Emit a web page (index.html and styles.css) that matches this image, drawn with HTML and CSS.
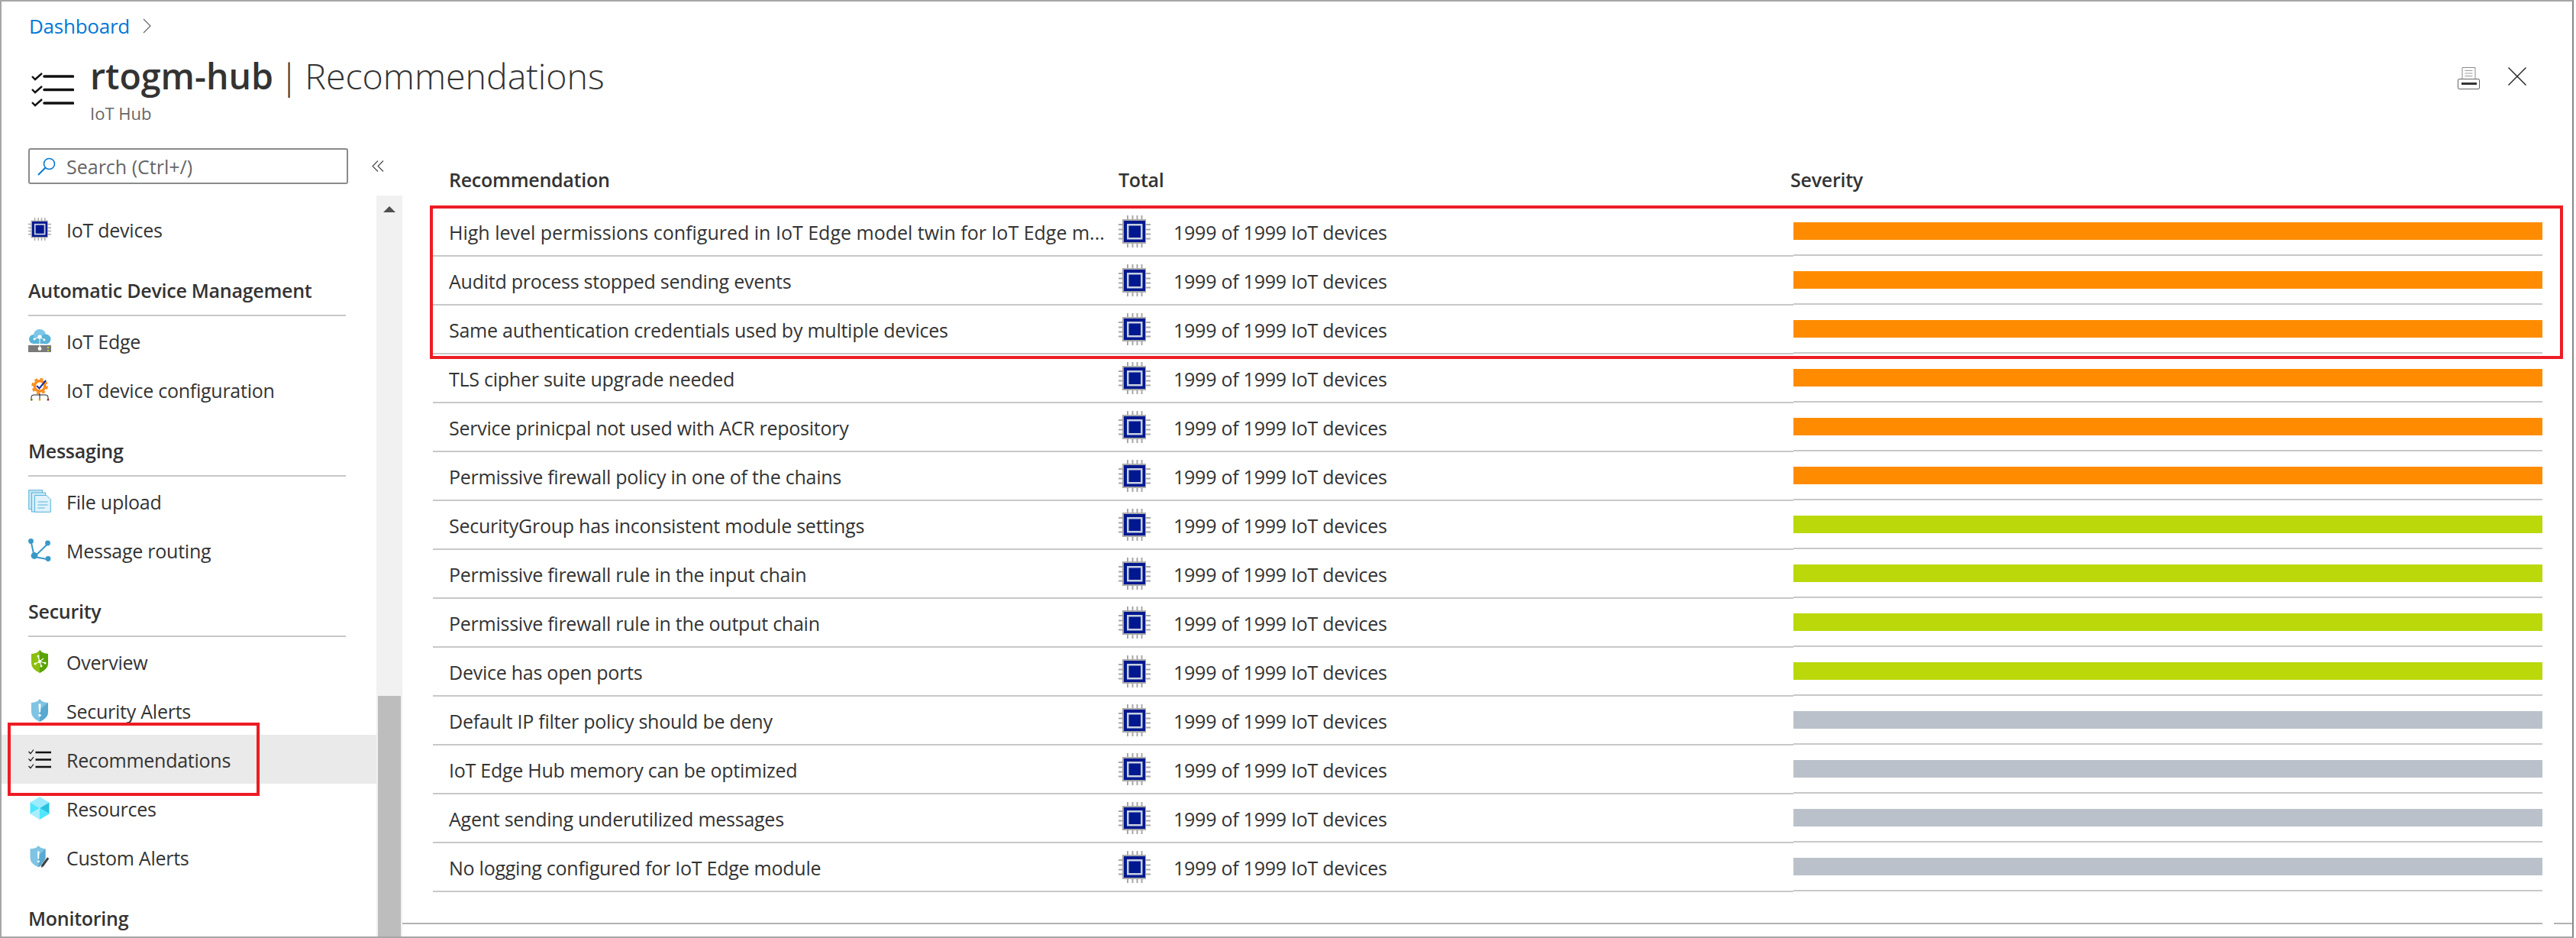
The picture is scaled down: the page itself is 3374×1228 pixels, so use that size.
FILE: index.html
```html
<!DOCTYPE html>
<html lang="en">
<head>
  <meta charset="UTF-8" />
  <title>rtogm-hub | Recommendations</title>
  <link rel="stylesheet" href="styles.css">
</head>
<body>

  <!-- Icon sheet -->
  <svg class="icon-sheet" xmlns="http://www.w3.org/2000/svg">
    <symbol id="i-check" viewBox="0 0 56 46">
      <path d="M17 6H54.500M17 23.500H54.500M17 41H54.500" fill="none" stroke="currentColor" stroke-width="3.600" stroke-linecap="round"/>
      <path d="M1 6l4 4 9-8M1 23l4 4 9-8M1 40l4 4 9-8" fill="none" stroke="currentColor" stroke-width="2.400"/>
    </symbol>
    <symbol id="i-check-small" viewBox="0 0 30 30">
      <path d="M9.500 6H30M9.500 15.500H30M9.500 25H30" fill="none" stroke="currentColor" stroke-width="2.400"/>
      <path d="M.500 5l2.500 2.500 4-5M.500 14.500l2.500 2.500 4-5M.500 24l2.500 2.500 4-5" fill="none" stroke="currentColor" stroke-width="1.200"/>
    </symbol>
    <symbol id="i-chip" viewBox="0 0 42 42">
      <path d="M12 0v42M18.500 0v42M24.500 0v42M30.500 0v42M0 12h42M0 18.500h42M0 24.500h42M0 30.500h42" stroke="#a8a8a8" stroke-width="2" fill="none"/>
      <rect x="5" y="5" width="31" height="32" fill="#a8a8a8"/>
      <rect x="7" y="7" width="28" height="28" fill="#00188f"/>
      <rect x="11" y="11" width="20.500" height="20.500" fill="#c9d0e0"/>
      <rect x="13.500" y="13.500" width="15.500" height="15.500" fill="#00188f"/>
    </symbol>
    <symbol id="i-edge" viewBox="0 0 30 30">
      <circle cx="7" cy="13" r="6" fill="#59b4d9"/>
      <circle cx="15" cy="8" r="8" fill="#7cc6e6"/>
      <circle cx="23" cy="13" r="6.500" fill="#59b4d9"/>
      <rect x="6" y="12" width="18" height="7" fill="#59b4d9"/>
      <path d="M8 13l7-3 6 4M15 10v15" stroke="#fff" stroke-width="1" fill="none"/>
      <circle cx="15" cy="10" r="2.600" fill="#fff"/>
      <circle cx="8" cy="13" r="1.400" fill="#fff"/>
      <circle cx="21" cy="14" r="1.400" fill="#fff"/>
      <rect x="0" y="21" width="30" height="9" fill="#7a7a7a"/>
      <circle cx="15" cy="25.500" r="2.400" fill="#fff"/>
      <path d="M15 19v6" stroke="#fff" stroke-width="1"/>
      <rect x="25" y="23" width="2" height="2" fill="#b8d432"/>
      <rect x="25" y="27" width="2" height="2" fill="#b8d432"/>
    </symbol>
    <symbol id="i-config" viewBox="0 0 30 30">
      <circle cx="15" cy="10.500" r="8.500" fill="#f78d1e"/>
      <circle cx="15" cy="10.500" r="9.500" fill="none" stroke="#f78d1e" stroke-width="2.500" stroke-dasharray="4 3.500"/>
      <circle cx="15" cy="10.500" r="5" fill="#fff"/>
      <path d="M11 10l3.500 3.500L23 3" fill="none" stroke="#1b2f9e" stroke-width="2"/>
      <path d="M4 27v-2a3 3 0 0 1 3-3h16a3 3 0 0 1 3 3v2M15 20v7" fill="none" stroke="#222" stroke-width="1"/>
      <rect x="3" y="27" width="2.500" height="2.500" fill="#5c8a00"/>
      <rect x="13.700" y="27" width="2.500" height="2.500" fill="#d9a520"/>
      <rect x="24.700" y="27" width="2.500" height="2.500" fill="#a4262c"/>
    </symbol>
    <symbol id="i-files" viewBox="0 0 30 30">
      <rect x="0.700" y="0.700" width="18" height="25" fill="#c5e6f5" stroke="#59b4d9"/>
      <rect x="4.500" y="4" width="18" height="25" fill="#d3ecf8" stroke="#59b4d9"/>
      <path d="M8.500 7.500H24l5.300 5.300V29.300H8.500z" fill="#e0f2fa" stroke="#59b4d9"/>
      <path d="M12.500 16h13M12.500 20h13M12.500 24h9" stroke="#59b4d9" stroke-width="1"/>
    </symbol>
    <symbol id="i-route" viewBox="0 0 30 30">
      <path d="M3.500 3.500L8 24L25.500 7M8 24l19 3.500" fill="none" stroke="#3999c6" stroke-width="2"/>
      <circle cx="3.500" cy="3.500" r="3.400" fill="#3999c6"/>
      <circle cx="25.500" cy="6" r="3.400" fill="#3999c6"/>
      <circle cx="8" cy="22.500" r="4.400" fill="#3999c6"/>
      <circle cx="26" cy="26.500" r="3.400" fill="#3999c6"/>
    </symbol>
    <symbol id="i-shield-green" viewBox="0 0 30 30">
      <path d="M15 0l3 3q4 2 8 2v12q0 8-11 13q-11-5-11-13V5q4 0 8-2z" fill="#8cbf0e"/>
      <path d="M15 0l3 3q4 2 8 2v12q0 8-11 13z" fill="#57a300"/>
      <path d="M13 8l2 7-6 3M15 15l7 2M15 15l2 6M15 15l5-4" fill="none" stroke="#fff" stroke-width="1.200"/>
      <circle cx="15" cy="15" r="2" fill="#fff"/>
      <circle cx="13" cy="8" r="1.500" fill="#fff"/>
      <circle cx="9" cy="18" r="1.500" fill="#fff"/>
      <circle cx="22" cy="17" r="1.500" fill="#fff"/>
      <circle cx="17" cy="21" r="1.500" fill="#fff"/>
    </symbol>
    <symbol id="i-shield-blue" viewBox="0 0 30 30">
      <path d="M15 0l3 3q4 2 8 2v12q0 8-11 13q-11-5-11-13V5q4 0 8-2z" fill="#7fc4e2"/>
      <path d="M26 5v12q0 8-11 13V14z" fill="#59a9d1"/>
      <path d="M13.500 6.500h3l-.5 11h-2z" fill="#fff"/>
      <circle cx="15" cy="21.500" r="1.800" fill="#fff"/>
    </symbol>
    <symbol id="i-cube" viewBox="0 0 30 30">
      <path d="M15 0l12.500 7.500L15 15 2.500 7.500z" fill="#9cebff"/>
      <path d="M2.500 7.500L15 15 2.500 22.500z" fill="#50e6ff"/>
      <path d="M27.500 7.500V22.500L15 15z" fill="#29c3e0"/>
      <path d="M2.500 22.500L15 15v15z" fill="#a8efff"/>
      <path d="M27.500 22.500L15 15v15z" fill="#50e6ff"/>
    </symbol>
    <symbol id="i-shield-pen" viewBox="0 0 30 36">
      <path d="M13 0l3 3q4 2 8 2v14q0 10-11 15Q0 29 0 19V5q6 0 10-2z" fill="#7fc4e2"/>
      <path d="M24 5v14q0 10-11 15V16z" fill="#59a9d1"/>
      <path d="M11.500 9h3l-.5 12h-2z" fill="#fff"/>
      <circle cx="13" cy="25" r="1.800" fill="#fff"/>
      <path d="M27 18l3 2.500-9 12.500-4 2 .5-4.500z" fill="#3c3c3c" stroke="#fff" stroke-width="0.600"/>
    </symbol>
  </svg>

  <div class="frame">

    <header class="page-head">
      <nav class="crumbs">
        <a class="crumb-link">Dashboard</a>
        <svg class="crumb-arrow" viewBox="0 0 11 20"><path d="M1 1l9 9-9 9" fill="none" stroke="#666" stroke-width="1.200"/></svg>
      </nav>
      <div class="title-row">
        <svg class="title-icon"><use href="#i-check"/></svg>
        <div class="title-text">
          <h1><b>rtogm-hub</b> | Recommendations</h1>
          <p>IoT Hub</p>
        </div>
        <div class="head-tools">
          <svg class="print-icon" viewBox="0 0 29 29">
            <path d="M6 15V.500h17V15" fill="#fff" stroke="#8a8a8a"/>
            <path d="M9.500 4.500h10M9.500 8h10M9.500 11.500h10" stroke="#999" stroke-width="1"/>
            <rect x="0.500" y="15.500" width="28" height="13" rx="1.500" fill="#fff" stroke="#666"/>
            <rect x="5" y="20" width="20" height="3" fill="#333"/>
          </svg>
          <svg class="close-icon" viewBox="0 0 24 24"><path d="M.500.500l23 23M23.500.500l-23 23" stroke="#222" stroke-width="1.400"/></svg>
        </div>
      </div>
    </header>

    <div class="content">

      <aside class="side">
        <div class="search-row">
          <div class="search">
            <svg class="search-icon" viewBox="0 0 24 24"><circle cx="15.500" cy="8.500" r="7" fill="none" stroke="#0078d4" stroke-width="1.600"/><path d="M10.500 13.500L1 23" stroke="#0078d4" stroke-width="2"/></svg>
            <span>Search (Ctrl+/)</span>
          </div>
          <svg class="collapse" viewBox="0 0 16 15"><path d="M8 .500l-7 7 7 7M15 .500l-7 7 7 7" fill="none" stroke="#444" stroke-width="1.100"/></svg>
        </div>
        <div class="side-body">
          <ul class="menu">
            <li class="item"><svg class="item-icon"><use href="#i-chip"/></svg>IoT devices</li>
            <li class="group">Automatic Device Management</li>
            <li class="item"><svg class="item-icon"><use href="#i-edge"/></svg>IoT Edge</li>
            <li class="item"><svg class="item-icon"><use href="#i-config"/></svg>IoT device configuration</li>
            <li class="group">Messaging</li>
            <li class="item"><svg class="item-icon"><use href="#i-files"/></svg>File upload</li>
            <li class="item"><svg class="item-icon"><use href="#i-route"/></svg>Message routing</li>
            <li class="group">Security</li>
            <li class="item"><svg class="item-icon"><use href="#i-shield-green"/></svg>Overview</li>
            <li class="item"><svg class="item-icon"><use href="#i-shield-blue"/></svg>Security Alerts</li>
            <li class="item active"><svg class="item-icon small-check"><use href="#i-check-small"/></svg>Recommendations</li>
            <li class="item"><svg class="item-icon"><use href="#i-cube"/></svg>Resources</li>
            <li class="item"><svg class="item-icon"><use href="#i-shield-pen"/></svg>Custom Alerts</li>
            <li class="group">Monitoring</li>
          </ul>
          <div class="scrollbar">
            <div class="scroll-up"></div>
            <div class="scroll-thumb"></div>
          </div>
        </div>
      </aside>

      <main class="main">
        <div class="table-head">
          <div class="th-name">Recommendation</div>
          <div class="th-total">Total</div>
          <div class="th-sev">Severity</div>
        </div>

        <div class="row">
          <div class="name clipped">High level permissions configured in IoT Edge model twin for IoT Edge m...</div>
          <div class="total"><svg class="chip"><use href="#i-chip"/></svg>1999 of 1999 IoT devices</div>
          <div class="sev"><div class="bar orange"></div></div>
        </div>
        <div class="row">
          <div class="name">Auditd process stopped sending events</div>
          <div class="total"><svg class="chip"><use href="#i-chip"/></svg>1999 of 1999 IoT devices</div>
          <div class="sev"><div class="bar orange"></div></div>
        </div>
        <div class="row">
          <div class="name">Same authentication credentials used by multiple devices</div>
          <div class="total"><svg class="chip"><use href="#i-chip"/></svg>1999 of 1999 IoT devices</div>
          <div class="sev"><div class="bar orange"></div></div>
        </div>
        <div class="row">
          <div class="name">TLS cipher suite upgrade needed</div>
          <div class="total"><svg class="chip"><use href="#i-chip"/></svg>1999 of 1999 IoT devices</div>
          <div class="sev"><div class="bar orange"></div></div>
        </div>
        <div class="row">
          <div class="name">Service prinicpal not used with ACR repository</div>
          <div class="total"><svg class="chip"><use href="#i-chip"/></svg>1999 of 1999 IoT devices</div>
          <div class="sev"><div class="bar orange"></div></div>
        </div>
        <div class="row">
          <div class="name">Permissive firewall policy in one of the chains</div>
          <div class="total"><svg class="chip"><use href="#i-chip"/></svg>1999 of 1999 IoT devices</div>
          <div class="sev"><div class="bar orange"></div></div>
        </div>
        <div class="row">
          <div class="name">SecurityGroup has inconsistent module settings</div>
          <div class="total"><svg class="chip"><use href="#i-chip"/></svg>1999 of 1999 IoT devices</div>
          <div class="sev"><div class="bar green"></div></div>
        </div>
        <div class="row">
          <div class="name">Permissive firewall rule in the input chain</div>
          <div class="total"><svg class="chip"><use href="#i-chip"/></svg>1999 of 1999 IoT devices</div>
          <div class="sev"><div class="bar green"></div></div>
        </div>
        <div class="row">
          <div class="name">Permissive firewall rule in the output chain</div>
          <div class="total"><svg class="chip"><use href="#i-chip"/></svg>1999 of 1999 IoT devices</div>
          <div class="sev"><div class="bar green"></div></div>
        </div>
        <div class="row">
          <div class="name">Device has open ports</div>
          <div class="total"><svg class="chip"><use href="#i-chip"/></svg>1999 of 1999 IoT devices</div>
          <div class="sev"><div class="bar green"></div></div>
        </div>
        <div class="row">
          <div class="name">Default IP filter policy should be deny</div>
          <div class="total"><svg class="chip"><use href="#i-chip"/></svg>1999 of 1999 IoT devices</div>
          <div class="sev"><div class="bar gray"></div></div>
        </div>
        <div class="row">
          <div class="name">IoT Edge Hub memory can be optimized</div>
          <div class="total"><svg class="chip"><use href="#i-chip"/></svg>1999 of 1999 IoT devices</div>
          <div class="sev"><div class="bar gray"></div></div>
        </div>
        <div class="row">
          <div class="name">Agent sending underutilized messages</div>
          <div class="total"><svg class="chip"><use href="#i-chip"/></svg>1999 of 1999 IoT devices</div>
          <div class="sev"><div class="bar gray"></div></div>
        </div>
        <div class="row">
          <div class="name">No logging configured for IoT Edge module</div>
          <div class="total"><svg class="chip"><use href="#i-chip"/></svg>1999 of 1999 IoT devices</div>
          <div class="sev"><div class="bar gray"></div></div>
        </div>

        <div class="table-foot">
          <div class="foot-line"></div>
          <div class="foot-line end"></div>
        </div>
      </main>

    </div>

    <!-- Red callouts drawn over the screenshot -->
    <div class="callout callout-rows"></div>
    <div class="callout callout-menu"></div>

  </div>

</body>
</html>
```

FILE: styles.css
```css
html, body {
  margin: 0;
  padding: 0;
  background: white;
  height: 100%;
  overflow: hidden;
  font-family: 'Open Sans', sans-serif;
  font-size: 25px;
  letter-spacing: -0.25px;
  color: #333;
}

.icon-sheet {
  display: none;
}

.frame {
  width: 3371px;
  height: 1228px;
  box-sizing: border-box;
  border: 2px solid #a6a6a6;
  border-right-color: #888;
  display: flex;
  flex-direction: column;
  position: relative;
  overflow: hidden;
}

/* Page header */
.page-head {
  height: 178px;
  padding-left: 36px;
  box-sizing: border-box;
  flex: none;
}

.crumbs {
  height: 64px;
  display: flex;
  align-items: center;
  gap: 17px;
}

.crumb-link {
  color: #0078d4;
  font-size: 26px;
}

.crumb-arrow {
  width: 11px;
  height: 20px;
}

.title-row {
  display: flex;
  align-items: flex-start;
}

.title-icon {
  width: 56px;
  height: 46px;
  margin: 28px 21px 0 3px;
  color: #111;
}

.title-text {
  padding-top: 1px;
}

.title-text h1 {
  margin: 0;
  font-size: 46.500px;
  font-weight: 300;
  line-height: 64px;
  letter-spacing: 0;
  word-spacing: -4px;
}

.title-text h1 b {
  font-weight: 600;
}

.title-text p {
  margin: 2px 0 0;
  font-size: 22px;
  line-height: 30px;
  letter-spacing: 0;
  color: #666;
}

.head-tools {
  margin-left: auto;
  padding: 22px 60px 0 0;
  display: flex;
  gap: 37px;
  align-items: flex-start;
}

.print-icon {
  width: 29px;
  height: 29px;
}

.close-icon {
  width: 24px;
  height: 24px;
}

/* Body */
.content {
  flex: 1;
  display: flex;
  min-height: 0;
}

/* Left menu */
.side {
  width: 525px;
  flex: none;
  display: flex;
  flex-direction: column;
  min-height: 0;
}

.search-row {
  height: 76px;
  flex: none;
  padding: 14px 0 0 35px;
  box-sizing: border-box;
  display: flex;
  align-items: flex-start;
}

.search {
  width: 419px;
  height: 47px;
  box-sizing: border-box;
  border: 2px solid #8a8a8a;
  border-radius: 3px;
  padding-left: 10px;
  display: flex;
  align-items: center;
  gap: 14px;
  color: #666;
  letter-spacing: 0;
}

.search-icon {
  width: 24px;
  height: 24px;
}

.collapse {
  width: 16px;
  height: 15px;
  margin: 16px 0 0 31px;
}

.side-body {
  flex: 1;
  display: flex;
  min-height: 0;
}

.menu {
  list-style: none;
  margin: 0;
  padding: 12px 0 0 0;
  width: 491px;
  flex: none;
  overflow: hidden;
}

.item {
  height: 64px;
  box-sizing: border-box;
  padding: 2px 0 0 35px;
  display: flex;
  align-items: center;
  gap: 20px;
  color: #333;
}

.item-icon {
  width: 30px;
  height: 30px;
  flex: none;
  margin-top: -2px;
}

.small-check {
  color: #111;
}

.item.active {
  background: #ebeaea;
}

.group {
  height: 82px;
  box-sizing: border-box;
  margin-left: 35px;
  width: 416px;
  border-bottom: 2px solid #c8c8c8;
  padding-top: 31px;
  font-weight: 600;
}

/* Scrollbar */
.scrollbar {
  width: 34px;
  flex: none;
  background: #f1f1f1;
  display: flex;
  flex-direction: column;
  align-items: center;
}

.scroll-up {
  margin-top: 14px;
  border-left: 8px solid transparent;
  border-right: 8px solid transparent;
  border-bottom: 8px solid #505050;
}

.scroll-thumb {
  width: 30px;
  flex: none;
  height: 315px;
  margin-top: auto;
  background: #bdbdbd;
}

/* Table */
.main {
  flex: 1;
  padding-left: 40px;
  min-width: 0;
}

.table-head {
  display: flex;
  height: 92px;
  box-sizing: border-box;
  padding-top: 38px;
  font-weight: 600;
}

.th-name {
  width: 898px;
  padding-left: 21px;
  box-sizing: border-box;
}

.th-total {
  width: 880px;
}

.row {
  display: flex;
  height: 64px;
}

.name {
  width: 898px;
  box-sizing: border-box;
  padding: 1px 0 0 21px;
  border-bottom: 2px solid #c8c8c8;
  display: flex;
  align-items: center;
  white-space: nowrap;
}

.name.clipped {
  letter-spacing: 0;
}

.total {
  width: 884px;
  box-sizing: border-box;
  padding-top: 1px;
  border-bottom: 2px solid #c8c8c8;
  display: flex;
  align-items: center;
  gap: 30px;
}

.chip {
  width: 42px;
  height: 42px;
  flex: none;
  margin-top: -1px;
}

.sev {
  width: 981px;
  box-sizing: border-box;
  margin-bottom: 1px;
  padding-top: 19px;
  border-bottom: 2px solid #c8c8c8;
}

.bar {
  height: 23px;
}

.orange { background: #ff8c00; }
.green { background: #bad80a; }
.gray { background: #bac1cb; }

.table-foot {
  display: flex;
  margin: 40px 0 0 -40px;
  gap: 15px;
}

.foot-line {
  width: 2803px;
  height: 2px;
  background: #b3b3b3;
}

.foot-line.end {
  width: auto;
  flex: 1;
}

/* Red callouts */
.callout {
  position: absolute;
  box-sizing: border-box;
  border: 4px solid #ed1c24;
}

.callout-rows {
  left: 561px;
  top: 267px;
  width: 2794px;
  height: 201px;
}

.callout-menu {
  left: 8px;
  top: 944px;
  width: 330px;
  height: 96px;
}
```
